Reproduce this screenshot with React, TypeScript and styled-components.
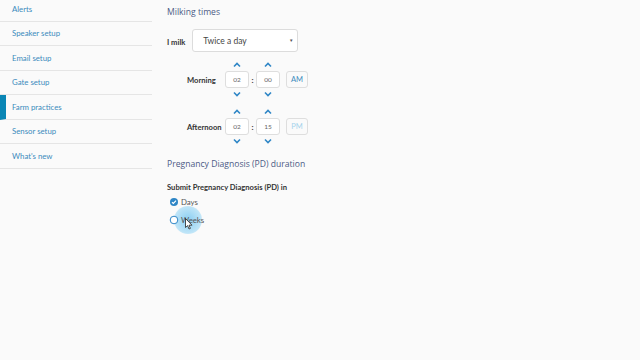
import { useState } from 'react';
import styled, { createGlobalStyle } from 'styled-components';

const GlobalStyle = createGlobalStyle`
  html, body {
    margin: 0;
    padding: 0;
    background: #fafafa;
  }
  body {
    font-family: Lato, 'Open Sans', sans-serif;
  }
`;

const Page = styled.div`
  display: flex;
  width: 640px;
  height: 360px;
  background: #fafafa;
  overflow: hidden;
`;

const Sidebar = styled.nav`
  width: 152px;
  flex-shrink: 0;
  display: flex;
  flex-direction: column;
  margin-top: -3px;
`;

const NavItem = styled.div<{ active?: boolean }>`
  height: 24.5px;
  box-sizing: border-box;
  display: flex;
  align-items: center;
  padding-left: ${({ active }) => (active ? '6px' : '12px')};
  font-size: 7.8px;
  color: #3a8bbd;
  border-bottom: 1px solid #e5e5e5;
  border-left: ${({ active }) => (active ? '6px solid #0a86b5' : 'none')};
`;

const Main = styled.main`
  padding: 6px 0 0 15px;
  flex: 1;
`;

const SectionTitle = styled.h2`
  margin: 0;
  font-family: 'Open Sans', sans-serif;
  font-weight: 400;
  font-size: 8.6px;
  line-height: 12px;
  color: #4c5a85;
`;

const MilkRow = styled.div`
  display: flex;
  align-items: center;
  margin-top: 11px;
  gap: 7px;
`;

const Label = styled.span`
  font-size: 7.6px;
  font-weight: 700;
  color: #333;
  padding-top: 2px;
`;

const Select = styled.div`
  width: 106px;
  height: 23px;
  box-sizing: border-box;
  background: #fff;
  border: 1px solid #dcdcdc;
  border-radius: 3px;
  display: flex;
  align-items: center;
  justify-content: space-between;
  padding: 0 4px 0 10px;
  font-size: 8.5px;
  color: #444;
`;

const Caret = styled.span`
  font-size: 4.5px;
  color: #555;
`;

const Times = styled.div`
  display: flex;
  flex-direction: column;
  gap: 5px;
  margin-top: 6px;
  margin-left: 20px;
`;

const TimeBlock = styled.div`
  display: grid;
  grid-template-columns: 38px 24px 7px 24px 28px;
  grid-template-rows: 13px 17px 12px;
  align-items: center;
`;

const TimeLabel = styled.span`
  grid-row: 2;
  grid-column: 1;
  font-size: 7.6px;
  font-weight: 700;
  color: #333;
  white-space: nowrap;
`;

const Chevron = styled.div<{ col: number; row: number }>`
  grid-column: ${({ col }) => col};
  grid-row: ${({ row }) => row};
  display: flex;
  justify-content: center;
`;

const Box = styled.div<{ col: number }>`
  grid-column: ${({ col }) => col};
  grid-row: 2;
  height: 17px;
  box-sizing: border-box;
  background: #fff;
  border: 1px solid #dedede;
  border-radius: 3px;
  display: flex;
  align-items: center;
  justify-content: center;
  font-size: 6.5px;
  color: #666;
`;

const Colon = styled.span`
  grid-column: 3;
  grid-row: 2;
  text-align: center;
  font-size: 8px;
  font-weight: 700;
  color: #333;
`;

const Meridiem = styled.div<{ on?: boolean }>`
  grid-column: 5;
  grid-row: 2;
  margin-left: 6px;
  width: 22px;
  height: 17px;
  box-sizing: border-box;
  border: 1px solid #dedede;
  border-radius: 3px;
  background: #fafafa;
  display: flex;
  align-items: center;
  justify-content: center;
  font-size: 7.5px;
  color: ${({ on }) => (on ? '#3a8bbd' : '#a5d3ec')};
`;

const PdSection = styled.div`
  margin-top: 11px;
`;

const SubLabel = styled.div`
  margin-top: 12px;
  font-size: 7.6px;
  line-height: 10px;
  font-weight: 700;
  color: #333;
`;

const Options = styled.div`
  margin-top: 1px;
  display: flex;
  flex-direction: column;
`;

const Option = styled.div`
  position: relative;
  display: flex;
  align-items: center;
  gap: 2px;
  margin-left: 2px;
  height: 18px;
  font-size: 7.8px;
  color: #555;
`;

const Glow = styled.div`
  position: absolute;
  left: 5px;
  top: -5px;
  width: 28px;
  height: 28px;
  border-radius: 50%;
  background: radial-gradient(circle, rgba(110, 195, 240, 0.8) 0%, rgba(140, 210, 245, 0.55) 65%, rgba(180, 225, 250, 0) 100%);
`;

const OptionText = styled.span`
  position: relative;
`;

const Cursor = styled.svg`
  position: absolute;
  left: 16px;
  top: 7px;
`;

const ChevronIcon = ({ down }: { down?: boolean }) => (
  <svg width="8" height="6" viewBox="0 0 8 6">
    <path
      d={down ? 'M1 1.5 L4 4.5 L7 1.5' : 'M1 4.5 L4 1.5 L7 4.5'}
      fill="none"
      stroke="#2f86c6"
      strokeWidth="1.6"
    />
  </svg>
);

const TimeRow = ({ label, hour, minute, pm }: { label: string; hour: string; minute: string; pm?: boolean }) => (
  <TimeBlock>
    <Chevron col={2} row={1}><ChevronIcon /></Chevron>
    <Chevron col={4} row={1}><ChevronIcon /></Chevron>
    <TimeLabel>{label}</TimeLabel>
    <Box col={2}>{hour}</Box>
    <Colon>:</Colon>
    <Box col={4}>{minute}</Box>
    <Meridiem on={!pm}>{pm ? 'PM' : 'AM'}</Meridiem>
    <Chevron col={2} row={3}><ChevronIcon down /></Chevron>
    <Chevron col={4} row={3}><ChevronIcon down /></Chevron>
  </TimeBlock>
);

const navItems = ['Alerts', 'Speaker setup', 'Email setup', 'Gate setup', 'Farm practices', 'Sensor setup', "What's new"];

export default function App() {
  const [unit] = useState('days');
  return (
    <Page>
      <GlobalStyle />
      <Sidebar>
        {navItems.map(item => (
          <NavItem key={item} active={item === 'Farm practices'}>
            {item}
          </NavItem>
        ))}
      </Sidebar>
      <Main>
        <SectionTitle>Milking times</SectionTitle>
        <MilkRow>
          <Label>I milk</Label>
          <Select>
            <span>Twice a day</span>
            <Caret>▼</Caret>
          </Select>
        </MilkRow>
        <Times>
          <TimeRow label="Morning" hour="02" minute="00" />
          <TimeRow label="Afternoon" hour="02" minute="15" pm />
        </Times>
        <PdSection>
          <SectionTitle>Pregnancy Diagnosis (PD) duration</SectionTitle>
          <SubLabel>Submit Pregnancy Diagnosis (PD) in</SubLabel>
          <Options>
            <Option>
              <svg width="10" height="10" viewBox="0 0 10 10">
                <circle cx="5" cy="5" r="4" fill={unit === 'days' ? '#2f86c6' : '#fff'} />
                <path d="M3 5.2 L4.4 6.5 L7 3.7" fill="none" stroke="#fff" strokeWidth="1.2" />
              </svg>
              <OptionText>Days</OptionText>
            </Option>
            <Option>
              <Glow />
              <svg width="10" height="10" viewBox="0 0 10 10" style={{ position: 'relative' }}>
                <circle cx="5" cy="5" r="3.8" fill="#fff" stroke="#2f86c6" strokeWidth="1" />
              </svg>
              <OptionText>Weeks</OptionText>
              <Cursor width="8" height="12" viewBox="0 0 8 12">
                <path d="M0.5 0.5 L0.5 9.5 L2.6 7.6 L4 11 L5.4 10.4 L4 7.2 L7 7.2 Z" fill="#fff" stroke="#222" strokeWidth="0.8" />
              </Cursor>
            </Option>
          </Options>
        </PdSection>
      </Main>
    </Page>
  );
}
